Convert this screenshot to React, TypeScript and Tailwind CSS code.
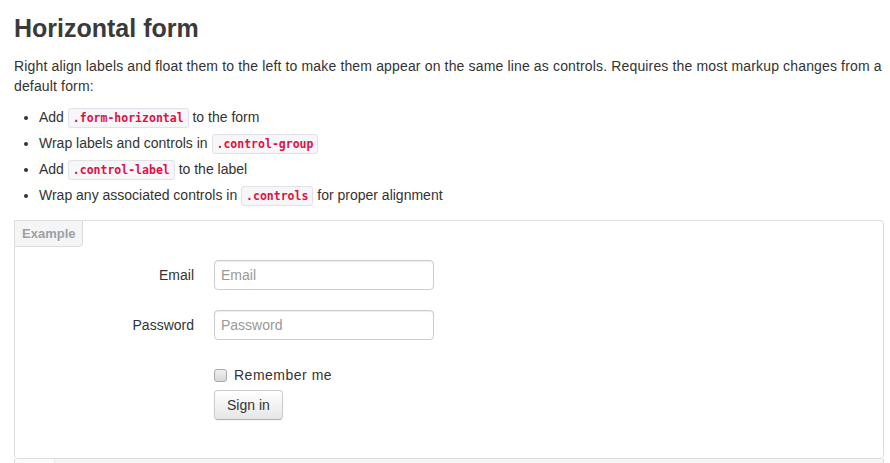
import React from 'react'

const code =
  "rounded-[3px] border border-[#e1e1e8] bg-[#f7f7f9] px-[4px] py-[2px] text-[11.5px] font-bold leading-[14px] text-[#dd1144] [font-family:'DejaVu_Sans_Mono',monospace]"

export default function App() {
  return (
    <div className="min-h-[463px] bg-white pl-[14px] text-[14px] leading-[20px] text-[#333] [font-family:'Liberation_Sans',Arial,sans-serif]">
      <div className="w-[870px]">
        <h2 className="mt-[8px] mb-[8px] text-[25px] font-bold leading-[40px] text-[#3a3a3a]">Horizontal form</h2>
        <p className="mb-[8px] tracking-[0.15px]">
          Right align labels and float them to the left to make them appear on the same line as controls. Requires the
          most markup changes from a default form:
        </p>
        <ul className="mb-[12px] ml-[25px] list-disc">
          <li className="h-[26px] leading-[26px]">
            Add <code className={code}>.form-horizontal</code> to the form
          </li>
          <li className="h-[26px] leading-[26px]">
            Wrap labels and controls in <code className={code}>.control-group</code>
          </li>
          <li className="h-[26px] leading-[26px]">
            Add <code className={code}>.control-label</code> to the label
          </li>
          <li className="h-[26px] leading-[26px]">
            Wrap any associated controls in <code className={code}>.controls</code> for proper alignment
          </li>
        </ul>

        <div className="relative rounded-[4px] border border-[#ddd] px-[19px] pt-[39px] pb-[38px]">
          <div className="absolute -top-px -left-px rounded-br-[4px] border border-[#ddd] bg-[#f5f5f5] px-[7px] py-[3px] text-[13px] font-bold leading-[19px] text-[#9da0a4]">
            Example
          </div>
          <form>
            <div className="mb-[20px] flex">
              <label className="w-[160px] pt-[5px] text-right">Email</label>
              <div className="ml-[20px]">
                <input
                  type="text"
                  placeholder="Email"
                  className="h-[30px] w-[220px] rounded-[4px] border border-[#ccc] px-[6px] py-[4px] leading-[20px] shadow-[inset_0_1px_1px_rgba(0,0,0,0.075)] outline-none placeholder:text-[#999]"
                />
              </div>
            </div>
            <div className="mb-[20px] flex">
              <label className="w-[160px] pt-[5px] text-right">Password</label>
              <div className="ml-[20px]">
                <input
                  type="password"
                  placeholder="Password"
                  className="h-[30px] w-[220px] rounded-[4px] border border-[#ccc] px-[6px] py-[4px] leading-[20px] shadow-[inset_0_1px_1px_rgba(0,0,0,0.075)] outline-none placeholder:text-[#999]"
                />
              </div>
            </div>
            <div className="flex">
              <div className="ml-[180px]">
                <label className="mb-[5px] flex items-center pt-[5px] tracking-[0.5px]">
                  <span className="mr-[7px] inline-block h-[13px] w-[13px] rounded-[3px] border border-[#a9a9a9] bg-gradient-to-b from-[#f0f0f0] to-[#d8d8d8]" />
                  Remember me
                </label>
                <button
                  type="button"
                  className="h-[30px] rounded-[4px] border border-[#ccc] border-b-[#b3b3b3] bg-gradient-to-b from-white to-[#e6e6e6] px-[12px] py-[4px] leading-[20px] text-[#333] shadow-[inset_0_1px_0_rgba(255,255,255,0.2),0_1px_2px_rgba(0,0,0,0.05)]"
                >
                  Sign in
                </button>
              </div>
            </div>
          </form>
        </div>
        <div className="flex h-[10px] border-x border-[#ddd] bg-[#f5f5f5]">
          <div className="w-[40px] border-r border-[#ececf0] bg-[#fbfbfc]" />
        </div>
      </div>
    </div>
  )
}
